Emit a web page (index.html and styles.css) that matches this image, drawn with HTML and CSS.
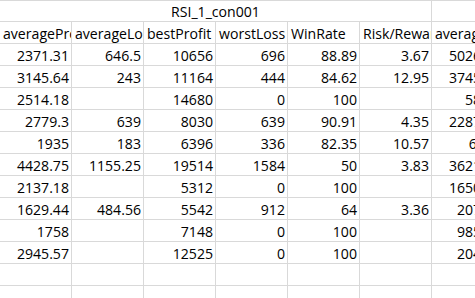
FILE: index.html
```
<!DOCTYPE html>
<html>
<head>
<meta charset="utf-8">
<link rel="stylesheet" href="styles.css">
</head>
<body>
<div class="sheet">
  <div class="cell title">RSI_1_con001</div><div class="cell"></div>

  <div class="cell head">averageProfit</div><div class="cell head">averageLoss</div><div class="cell head">bestProfit</div><div class="cell head">worstLoss</div><div class="cell head">WinRate</div><div class="cell head">Risk/Reward</div><div class="cell head">averageTrade</div>

  <div class="cell num">2371.31</div><div class="cell num">646.5</div><div class="cell num">10656</div><div class="cell num">696</div><div class="cell num">88.89</div><div class="cell num">3.67</div><div class="cell num">5026.47</div>
  <div class="cell num">3145.64</div><div class="cell num">243</div><div class="cell num">11164</div><div class="cell num">444</div><div class="cell num">84.62</div><div class="cell num">12.95</div><div class="cell num">3745.15</div>
  <div class="cell num">2514.18</div><div class="cell num"></div><div class="cell num">14680</div><div class="cell num">0</div><div class="cell num">100</div><div class="cell num"></div><div class="cell num">587.5</div>
  <div class="cell num">2779.3</div><div class="cell num">639</div><div class="cell num">8030</div><div class="cell num">639</div><div class="cell num">90.91</div><div class="cell num">4.35</div><div class="cell num">2287.64</div>
  <div class="cell num">1935</div><div class="cell num">183</div><div class="cell num">6396</div><div class="cell num">336</div><div class="cell num">82.35</div><div class="cell num">10.57</div><div class="cell num">6125</div>
  <div class="cell num">4428.75</div><div class="cell num">1155.25</div><div class="cell num">19514</div><div class="cell num">1584</div><div class="cell num">50</div><div class="cell num">3.83</div><div class="cell num">3621.25</div>
  <div class="cell num">2137.18</div><div class="cell num"></div><div class="cell num">5312</div><div class="cell num">0</div><div class="cell num">100</div><div class="cell num"></div><div class="cell num">1650.45</div>
  <div class="cell num">1629.44</div><div class="cell num">484.56</div><div class="cell num">5542</div><div class="cell num">912</div><div class="cell num">64</div><div class="cell num">3.36</div><div class="cell num">2071.5</div>
  <div class="cell num">1758</div><div class="cell num"></div><div class="cell num">7148</div><div class="cell num">0</div><div class="cell num">100</div><div class="cell num"></div><div class="cell num">985.75</div>
  <div class="cell num">2945.57</div><div class="cell num"></div><div class="cell num">12525</div><div class="cell num">0</div><div class="cell num">100</div><div class="cell num"></div><div class="cell num">2045.5</div>

  <div class="cell"></div><div class="cell"></div><div class="cell"></div><div class="cell"></div><div class="cell"></div><div class="cell"></div><div class="cell"></div>
  <div class="cell"></div><div class="cell"></div><div class="cell"></div><div class="cell"></div><div class="cell"></div><div class="cell"></div><div class="cell"></div>
</div>
</body>
</html>
```

FILE: styles.css
```
html, body {
  margin: 0;
  padding: 0;
  background: #ffffff;
  overflow: hidden;
}

body {
  width: 475px;
  height: 298px;
}

.sheet {
  display: grid;
  grid-template-columns: repeat(7, 72px);
  grid-template-rows: 21px;
  grid-auto-rows: 22px;
  width: 504px;
  border-top: 1px solid #d9d9d9;
  font-family: "Open Sans", "Noto Sans", sans-serif;
  font-size: 14.1px;
  color: #000000;
}

.cell {
  box-sizing: border-box;
  border-right: 1px solid #d9d9d9;
  border-bottom: 1px solid #d9d9d9;
  display: flex;
  align-items: flex-end;
  line-height: 18px;
  white-space: nowrap;
  overflow: hidden;
}

.title {
  grid-column: span 6;
  justify-content: center;
}

.head {
  justify-content: flex-start;
  padding-left: 3px;
}

.num {
  justify-content: flex-end;
  padding-right: 2px;
}
```
